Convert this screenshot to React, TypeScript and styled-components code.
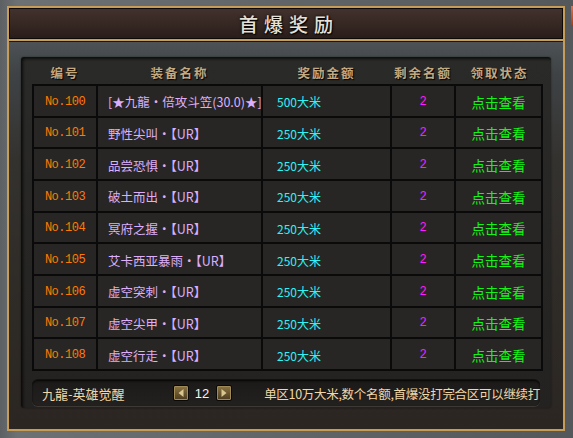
import React from "react";
import styled, { createGlobalStyle } from "styled-components";

const Global = createGlobalStyle`
  html, body { margin: 0; padding: 0; background: #4b4d4f; }
  * { box-sizing: border-box; }
`;

const CJK = `"Noto Sans CJK SC", "Noto Sans", sans-serif`;

const Outer = styled.div`
  position: relative;
  width: 573px;
  height: 438px;
  padding: 6px 8px 7px 7px;
  background: linear-gradient(90deg, #5d6063 0%, #6e7173 3%, #55585b 100%);
  font-family: ${CJK};
  overflow: hidden;
`;

const CloseSliver = styled.div`
  position: absolute;
  top: 6px;
  right: 0;
  width: 2px;
  height: 19px;
  background: linear-gradient(#e0704a, #a8401e);
`;

const Window = styled.div`
  height: 100%;
  display: flex;
  flex-direction: column;
  border: 2px solid #c59c58;
  background: #2c2926;
`;

const TitleBar = styled.div`
  height: 33px;
  display: flex;
  align-items: center;
  justify-content: center;
  border: 1px solid #0d0908;
  background: linear-gradient(180deg, #42312c 0%, #382924 45%, #291d1a 100%);
`;

const Title = styled.h1`
  margin: 0 0 0 6px;
  font-family: ${CJK};
  font-size: 19px;
  font-weight: 500;
  letter-spacing: 6px;
  color: #e6e1d6;
  text-shadow: 1px 1px 1px #000, 0 0 3px #000;
`;

const GoldRule = styled.div`
  height: 3px;
  background: #c59c58;
  border-bottom: 1px solid #1a1512;
`;

const Body = styled.div`
  flex: 1;
  padding: 15px 12px 21px 12px;
  background: linear-gradient(180deg, #4d5256 0%, #3f4346 8%, #34322f 30%, #2e2a26 70%, #2b2622 100%);
`;

const Panel = styled.div`
  height: 100%;
  display: flex;
  flex-direction: column;
  padding: 0 8px 2px 11px;
  background: linear-gradient(180deg, #2a2a28 0%, #232220 100%);
  box-shadow: inset 2px 2px 3px rgba(0, 0, 0, 0.7), 0 0 2px rgba(0, 0, 0, 0.5);
  border-radius: 3px;
`;

const HeaderRow = styled.div`
  height: 27px;
  display: grid;
  grid-template-columns: 64px 165px 129px 64px 1fr;
  align-items: center;
  padding-top: 4px;
`;

const HeadCell = styled.div`
  text-align: center;
  white-space: nowrap;
  font-family: ${CJK};
  font-size: 12.5px;
  font-weight: 700;
  letter-spacing: 2px;
  color: #c3a880;
  text-shadow: 1px 1px 1px #000;
  padding-left: 2px;
`;

const Table = styled.div`
  height: 287px;
  display: grid;
  grid-template-columns: 62px 163px 127px 62px 1fr;
  grid-template-rows: repeat(9, 1fr);
  gap: 2px;
  padding: 2px;
  background: #0a0a0a;
`;

const Cell = styled.div<{ $align?: "left" | "center"; $pad?: number }>`
  display: flex;
  align-items: center;
  justify-content: ${(p) => (p.$align === "left" ? "flex-start" : "center")};
  padding-left: ${(p) => p.$pad ?? 0}px;
  padding-top: 2px;
  background: #272624;
  white-space: nowrap;
  overflow: hidden;
`;

const NoText = styled.span`
  font-family: "Liberation Mono", monospace;
  font-size: 12px;
  color: #ff7a00;
  letter-spacing: -0.5px;
`;

const NameText = styled.span`
  font-family: ${CJK};
  font-size: 12.5px;
  color: #dcaefc;
`;

const AmountText = styled.span`
  font-family: ${CJK};
  font-size: 12px;
  color: #2ef2f6;
`;

const CountText = styled.span`
  font-family: "Liberation Mono", monospace;
  font-size: 12px;
  color: #ff1cff;
`;

const LinkText = styled.span`
  font-family: ${CJK};
  font-size: 13.5px;
  color: #15f515;
  cursor: pointer;
`;

const Footer = styled.div`
  margin-top: 8px;
  height: 27px;
  margin-right: 3px;
  display: flex;
  align-items: center;
  padding: 0 0 0 10px;
  border-radius: 6px;
  background: linear-gradient(180deg, #1b1a19 0%, #23211f 100%);
  border-top: 1px solid #111;
  box-shadow: inset 0 1px 2px rgba(0, 0, 0, 0.8), 0 1px 0 #3d3a36;
`;

const FooterTitle = styled.span`
  width: 131px;
  font-family: ${CJK};
  font-size: 13px;
  color: #f3d6a6;
`;

const Pager = styled.div`
  display: flex;
  align-items: center;
  gap: 6px;
  width: 92px;
`;

const ArrowBtn = styled.button`
  width: 16px;
  height: 16px;
  padding: 0;
  display: flex;
  align-items: center;
  justify-content: center;
  border: 1px solid #0b0905;
  border-radius: 2px;
  background: linear-gradient(180deg, #8d7644 0%, #6b5630 50%, #4b3b1d 100%);
  box-shadow: inset 0 0 0 1px #a08a55;
  cursor: pointer;
`;

const PageNum = styled.span`
  font-family: "Liberation Sans", sans-serif;
  font-size: 13px;
  color: #f4f4f4;
  width: 15px;
  text-align: center;
`;

const FooterNote = styled.span`
  font-family: ${CJK};
  font-size: 12.5px;
  color: #f3d6a6;
  white-space: nowrap;
  letter-spacing: -0.3px;
`;

const rows = [
  { no: 100, name: "[★九龍・倍攻斗笠(30.0)★]", amount: "500大米" },
  { no: 101, name: "野性尖叫・【UR】", amount: "250大米" },
  { no: 102, name: "品尝恐惧・【UR】", amount: "250大米" },
  { no: 103, name: "破土而出・【UR】", amount: "250大米" },
  { no: 104, name: "冥府之握・【UR】", amount: "250大米" },
  { no: 105, name: "艾卡西亚暴雨・【UR】", amount: "250大米" },
  { no: 106, name: "虚空突刺・【UR】", amount: "250大米" },
  { no: 107, name: "虚空尖甲・【UR】", amount: "250大米" },
  { no: 108, name: "虚空行走・【UR】", amount: "250大米" },
];

const Tri = ({ dir }: { dir: "l" | "r" }) => (
  <svg width="6" height="8" viewBox="0 0 6 8">
    {dir === "l" ? (
      <polygon points="5.5,0 5.5,8 0.5,4" fill="#d8c890" />
    ) : (
      <polygon points="0.5,0 0.5,8 5.5,4" fill="#d8c890" />
    )}
  </svg>
);

export default function App() {
  return (
    <>
      <Global />
      <Outer>
        <CloseSliver />
        <Window>
          <TitleBar>
            <Title>首爆奖励</Title>
          </TitleBar>
          <GoldRule />
          <Body>
            <Panel>
              <HeaderRow>
                <HeadCell>编号</HeadCell>
                <HeadCell>装备名称</HeadCell>
                <HeadCell>奖励金额</HeadCell>
                <HeadCell>剩余名额</HeadCell>
                <HeadCell>领取状态</HeadCell>
              </HeaderRow>
              <Table>
                {rows.map((r) => (
                  <React.Fragment key={r.no}>
                    <Cell>
                      <NoText>No.{r.no}</NoText>
                    </Cell>
                    <Cell $align="left" $pad={10}>
                      <NameText>{r.name}</NameText>
                    </Cell>
                    <Cell $align="left" $pad={14}>
                      <AmountText>{r.amount}</AmountText>
                    </Cell>
                    <Cell>
                      <CountText>2</CountText>
                    </Cell>
                    <Cell>
                      <LinkText>点击查看</LinkText>
                    </Cell>
                  </React.Fragment>
                ))}
              </Table>
              <Footer>
                <FooterTitle>九龍-英雄觉醒</FooterTitle>
                <Pager>
                  <ArrowBtn aria-label="prev">
                    <Tri dir="l" />
                  </ArrowBtn>
                  <PageNum>12</PageNum>
                  <ArrowBtn aria-label="next">
                    <Tri dir="r" />
                  </ArrowBtn>
                </Pager>
                <FooterNote>单区10万大米,数个名额,首爆没打完合区可以继续打</FooterNote>
              </Footer>
            </Panel>
          </Body>
        </Window>
      </Outer>
    </>
  );
}
